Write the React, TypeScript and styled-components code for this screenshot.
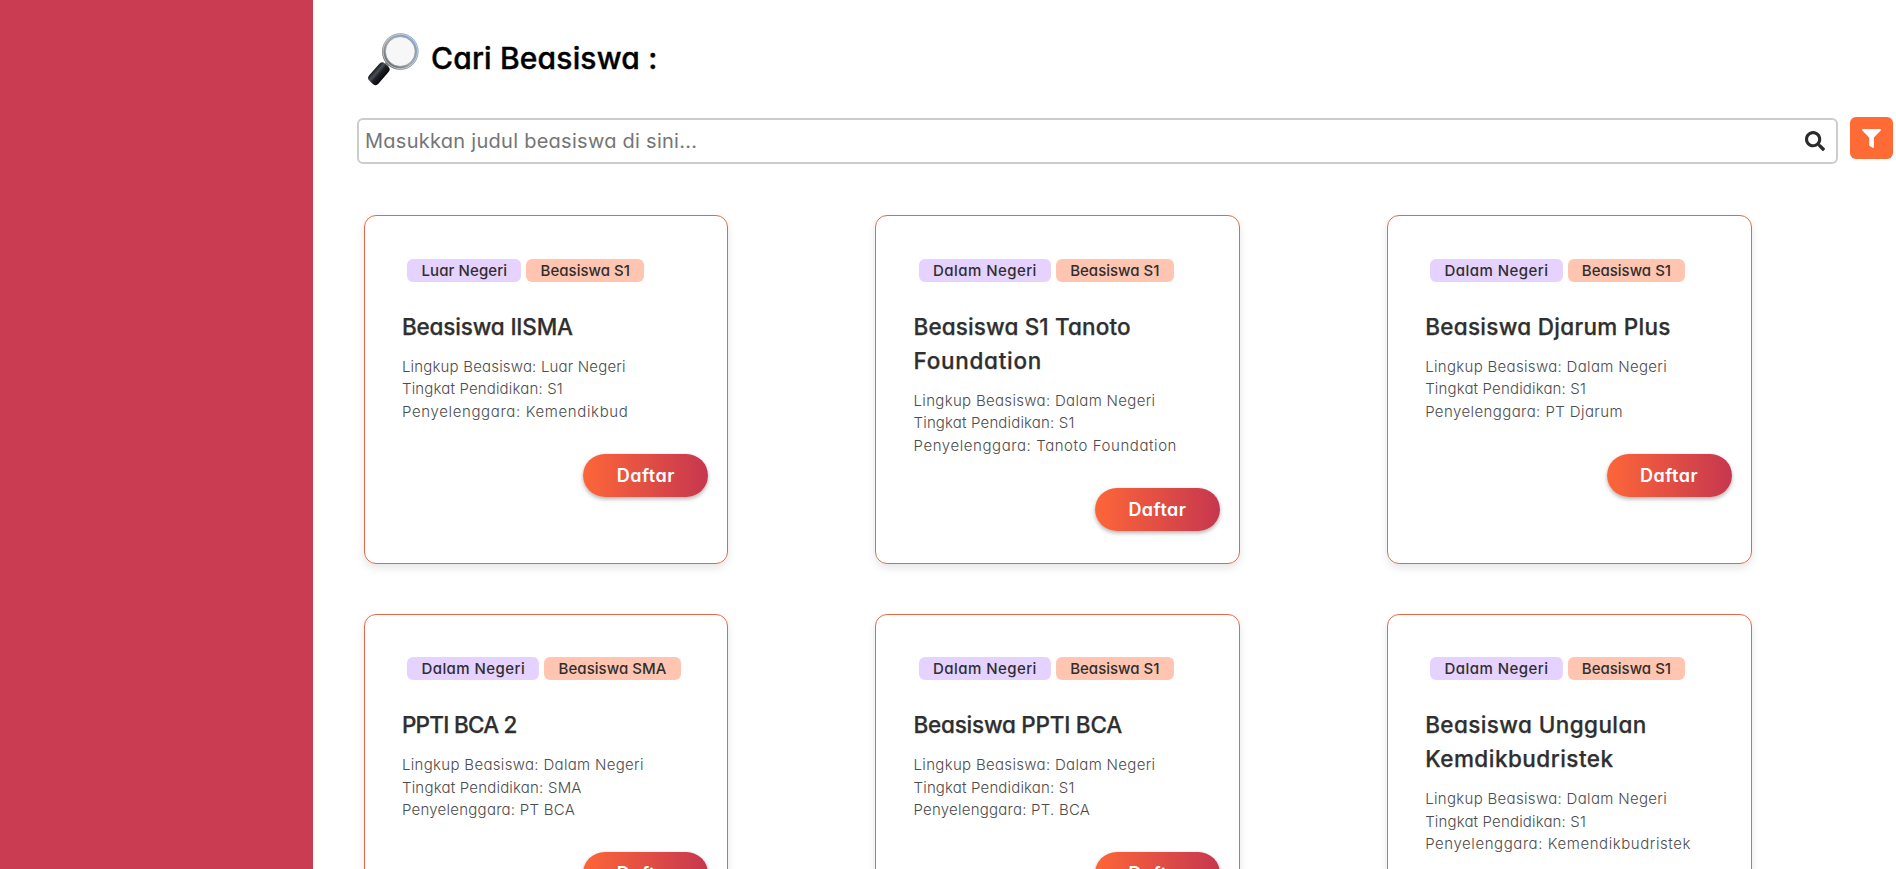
import React from 'react';
import styled, { createGlobalStyle } from 'styled-components';
import { FaFilter, FaSearch } from 'react-icons/fa';

const GlobalStyle = createGlobalStyle`
  *, *::before, *::after { box-sizing: border-box; }
  body {
    margin: 0;
    background: #fff;
    color: #2f2f2f;
    font-family: Inter, 'Open Sans', sans-serif;
    font-feature-settings: 'cv11' 1;
  }
  input, button { font: inherit; font-feature-settings: inherit; }
`;

const Page = styled.div`
  display: flex;
  height: 869px;
  overflow: hidden;
`;

const Sidebar = styled.aside`
  flex: 0 0 313px;
  background: #ca3c51;
`;

const Content = styled.main`
  flex: 1;
  min-width: 0;
  padding: 32px 0 0 44px;
`;

const Header = styled.header`
  display: flex;
  align-items: center;
  gap: 11px;
  height: 54px;
  padding-left: 9px;
`;

const Heading = styled.h1`
  margin: 0 0 2px;
  font-size: 30px;
  font-weight: 500;
  line-height: 45px;
  letter-spacing: 0.17px;
  color: #000;
  -webkit-text-stroke: 0.4px;
`;

const SearchRow = styled.div`
  display: flex;
  align-items: flex-start;
  gap: 12px;
  margin-top: 31px;
`;

const SearchBox = styled.label`
  display: flex;
  align-items: center;
  width: 1481px;
  height: 46px;
  margin-top: 1px;
  padding: 0 11px 0 6px;
  border: 2px solid #ccc;
  border-radius: 6px;
  font-size: 20px;
  color: #2b2b2b;
`;

const SearchInput = styled.input`
  flex: 1;
  padding: 0;
  border: 0;
  outline: 0;
  background: transparent;
  letter-spacing: 0.27px;
  &::placeholder { color: #757575; opacity: 1; }
`;

const FilterButton = styled.button`
  display: flex;
  align-items: center;
  justify-content: center;
  width: 43px;
  height: 42px;
  padding: 0;
  border: 0;
  border-radius: 6px;
  background: #ff6b35;
  color: #fff;
  font-size: 19px;
`;

const Grid = styled.section`
  display: grid;
  grid-template-columns: repeat(3, 364.6px);
  grid-auto-rows: 349px;
  gap: 49.6px 147px;
  padding: 51.2px 0 0 6.75px;
`;

const Card = styled.article`
  padding: 42.4px 19px 0 37.2px;
  border: 1px solid #e2694c;
  border-radius: 12px;
  box-shadow: 0 4px 8px rgba(0, 0, 0, 0.1);
`;

const Tags = styled.div`
  display: flex;
  gap: 5px;
  padding-left: 5.3px;
`;

const Tag = styled.span<{ $kind: 'scope' | 'level'; $track: number }>`
  height: 23px;
  padding: 0 14.2px;
  border-radius: 6px;
  background: ${p => (p.$kind === 'scope' ? '#e6d2ff' : '#ffc5b1')};
  font-size: 15px;
  font-weight: 500;
  line-height: 23px;
  letter-spacing: ${p => p.$track}px;
  white-space: nowrap;
`;

const Title = styled.h2`
  margin: 28px 0 12px;
  font-size: 22.5px;
  font-weight: 500;
  line-height: 34px;
  -webkit-text-stroke: 0.25px;
`;

const Line = styled.span<{ $track: number }>`
  display: block;
  letter-spacing: ${p => p.$track}px;
  white-space: nowrap;
`;

const Details = styled.p`
  margin: 0;
  font-size: 15px;
  font-weight: 300;
  line-height: 22.5px;
  color: #4c4c4c;
`;

const RegisterButton = styled.button`
  display: block;
  width: 125px;
  height: 43px;
  margin: 30.8px 0 0 auto;
  padding: 0;
  border: 0;
  border-radius: 22px;
  background: linear-gradient(to right, #fd6639, #c6374f);
  box-shadow: 0 2px 4px rgba(0, 0, 0, 0.3);
  color: #fff;
  font-size: 18px;
  font-weight: 600;
  letter-spacing: 0.5px;
`;

type Text = [string, number];

interface Scholarship {
  scope: Text;
  level: Text;
  title: Text[];
  details: Text[];
}

const abroad: Text = ['Luar Negeri', 0.108];
const domestic: Text = ['Dalam Negeri', 0.44];
const bachelor: Text = ['Beasiswa S1', 0.005];
const domesticLine: Text = ['Lingkup Beasiswa: Dalam Negeri', 0.32];
const bachelorLine: Text = ['Tingkat Pendidikan: S1', 0.16];

const scholarships: Scholarship[] = [
  {
    scope: abroad,
    level: bachelor,
    title: [['Beasiswa IISMA', -0.17]],
    details: [['Lingkup Beasiswa: Luar Negeri', 0.18], bachelorLine, ['Penyelenggara: Kemendikbud', 0.64]],
  },
  {
    scope: domestic,
    level: bachelor,
    title: [['Beasiswa S1 Tanoto', 0.13], ['Foundation', 0.7]],
    details: [domesticLine, bachelorLine, ['Penyelenggara: Tanoto Foundation', 0.57]],
  },
  {
    scope: domestic,
    level: bachelor,
    title: [['Beasiswa Djarum Plus', 0.29]],
    details: [domesticLine, bachelorLine, ['Penyelenggara: PT Djarum', 0.41]],
  },
  {
    scope: domestic,
    level: ['Beasiswa SMA', 0.038],
    title: [['PPTI BCA 2', -0.75]],
    details: [domesticLine, ['Tingkat Pendidikan: SMA', 0.2], ['Penyelenggara: PT BCA', 0.25]],
  },
  {
    scope: domestic,
    level: bachelor,
    title: [['Beasiswa PPTI BCA', -0.24]],
    details: [domesticLine, bachelorLine, ['Penyelenggara: PT. BCA', 0.23]],
  },
  {
    scope: domestic,
    level: bachelor,
    title: [['Beasiswa Unggulan', 0.4], ['Kemdikbudristek', 0.48]],
    details: [domesticLine, bachelorLine, ['Penyelenggara: Kemendikbudristek', 0.57]],
  },
];

function Magnifier() {
  return (
    <svg width="54" height="54" viewBox="0 0 54 54" aria-hidden="true">
      <defs>
        <linearGradient id="ring" x1="0" y1="1" x2="1" y2="0">
          <stop offset="0" stopColor="#55575b" />
          <stop offset="0.45" stopColor="#a4a7ab" />
          <stop offset="0.8" stopColor="#84a0c8" />
          <stop offset="1" stopColor="#b9cce6" />
        </linearGradient>
        <linearGradient id="handle" x1="0" y1="0" x2="1" y2="0">
          <stop offset="0" stopColor="#17191c" />
          <stop offset="0.3" stopColor="#4b4f55" />
          <stop offset="0.55" stopColor="#1d1f23" />
          <stop offset="1" stopColor="#08090a" />
        </linearGradient>
      </defs>
      <path d="M18 35.5 22.5 31" stroke="#8d9094" strokeWidth="5" />
      <g transform="rotate(41 12.8 41.5)">
        <rect x="6.8" y="30" width="12.4" height="23.2" rx="4" fill="url(#handle)" />
      </g>
      <circle cx="34.3" cy="19.5" r="16.6" fill="#f7f7f8" stroke="url(#ring)" strokeWidth="3.4" />
      <circle cx="34.3" cy="19.5" r="17.2" fill="none" stroke="#d8dce2" strokeWidth="0.7" />
      <circle cx="34.3" cy="19.5" r="14.9" fill="none" stroke="#7d8187" strokeWidth="0.6" />
    </svg>
  );
}

function ScholarshipCard({ item }: { item: Scholarship }) {
  return (
    <Card>
      <Tags>
        <Tag $kind="scope" $track={item.scope[1]}>{item.scope[0]}</Tag>
        <Tag $kind="level" $track={item.level[1]}>{item.level[0]}</Tag>
      </Tags>
      <Title>
        {item.title.map(([text, track]) => (
          <Line key={text} $track={track}>{text}</Line>
        ))}
      </Title>
      <Details>
        {item.details.map(([text, track]) => (
          <Line key={text} $track={track}>{text}</Line>
        ))}
      </Details>
      <RegisterButton>Daftar</RegisterButton>
    </Card>
  );
}

export default function App() {
  return (
    <>
      <GlobalStyle />
      <Page>
        <Sidebar />
        <Content>
          <Header>
            <Magnifier />
            <Heading>Cari Beasiswa :</Heading>
          </Header>
          <SearchRow>
            <SearchBox>
              <SearchInput placeholder="Masukkan judul beasiswa di sini..." />
              <FaSearch />
            </SearchBox>
            <FilterButton aria-label="Filter">
              <FaFilter />
            </FilterButton>
          </SearchRow>
          <Grid>
            {scholarships.map(item => (
              <ScholarshipCard key={item.title[0][0]} item={item} />
            ))}
          </Grid>
        </Content>
      </Page>
    </>
  );
}
